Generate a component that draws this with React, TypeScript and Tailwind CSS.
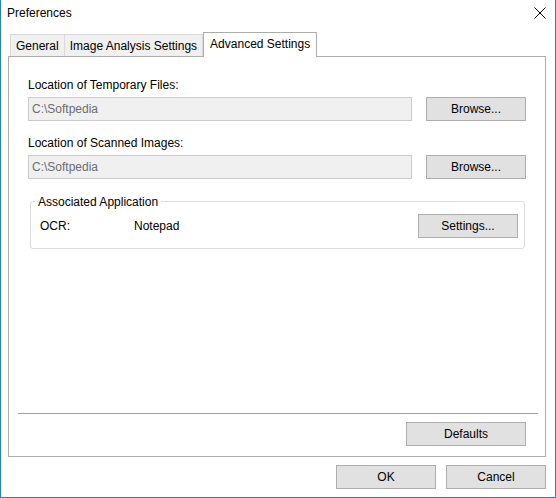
import React from "react";

function Btn({ label, className = "" }: { label: string; className?: string }) {
  return (
    <button
      className={`h-[24px] border border-[#adadad] bg-[#e1e1e1] text-[12px] leading-none text-black ${className}`}
    >
      {label}
    </button>
  );
}

function PathRow({ label, value }: { label: string; value: string }) {
  return (
    <div>
      <div className="h-[14px] leading-[14px]">{label}</div>
      <div className="mt-[5px] flex h-[24px] items-stretch">
        <div className="flex flex-1 items-center border border-[#cccccc] bg-[#f0f0f0] px-[3px] text-[#6d6d6d]">
          {value}
        </div>
        <Btn label="Browse..." className="ml-[14px] w-[100px]" />
      </div>
    </div>
  );
}

export default function App() {
  return (
    <div
      className="flex h-[498px] w-[556px] flex-col border-x border-b border-[#1883d7] bg-white text-[12px] text-black"
      style={{ fontFamily: '"Liberation Sans", Arial, sans-serif' }}
    >
      {/* title bar */}
      <div className="flex h-[26px] items-center justify-between pl-[6px] pr-[8px]">
        <span>Preferences</span>
        <svg width="12" height="12" viewBox="0 0 12 12" className="mr-[1px]">
          <path d="M0.5 0.5 L11.5 11.5 M11.5 0.5 L0.5 11.5" stroke="#000" strokeWidth="1" />
        </svg>
      </div>

      {/* tabs */}
      <div className="mt-[6px] flex items-end pl-[9px]">
        <div className="flex h-[22px] items-center border border-b-0 border-[#d9d9d9] bg-[#f0f0f0] px-[5px]">
          General
        </div>
        <div className="flex h-[22px] items-center border border-b-0 border-l-0 border-[#d9d9d9] bg-[#f0f0f0] px-[5px]">
          Image Analysis Settings
        </div>
        <div className="relative z-10 -mb-px flex h-[25px] items-center border border-b-0 border-[#adadad] bg-white px-[6px] pb-[2px]">
          Advanced Settings
        </div>
      </div>

      {/* panel */}
      <div className="ml-[7px] mr-[9px] flex h-[401px] flex-col border border-[#adadad] bg-white">
        <div className="px-[19px] pt-[21px]">
          <PathRow label="Location of Temporary Files:" value="C:\Softpedia" />
          <div className="mt-[15px]">
            <PathRow label="Location of Scanned Images:" value="C:\Softpedia" />
          </div>
        </div>

        {/* group box */}
        <div className="relative ml-[21px] mr-[20px] mt-[22px] h-[48px] rounded-[3px] border border-[#dcdcdc] pl-[9px] pr-[6px] pt-[12px]">
          <span className="absolute -top-[7px] left-[4px] bg-white px-[3px] leading-[14px]">
            Associated Application
          </span>
          <div className="flex items-center">
            <span className="w-[94px]">OCR:</span>
            <span className="flex-1">Notepad</span>
            <Btn label="Settings..." className="w-[100px]" />
          </div>
        </div>

        <div className="flex-1" />

        <div className="ml-[9px] mr-[7px] h-px bg-[#a0a0a0]" />
        <div className="mt-[8px] flex justify-end pb-[10px] pr-[19px]">
          <Btn label="Defaults" className="w-[120px]" />
        </div>
      </div>

      {/* bottom buttons */}
      <div className="mt-[8px] flex justify-end gap-[10px] pr-[9px]">
        <Btn label="OK" className="w-[100px]" />
        <Btn label="Cancel" className="w-[100px]" />
      </div>
    </div>
  );
}
